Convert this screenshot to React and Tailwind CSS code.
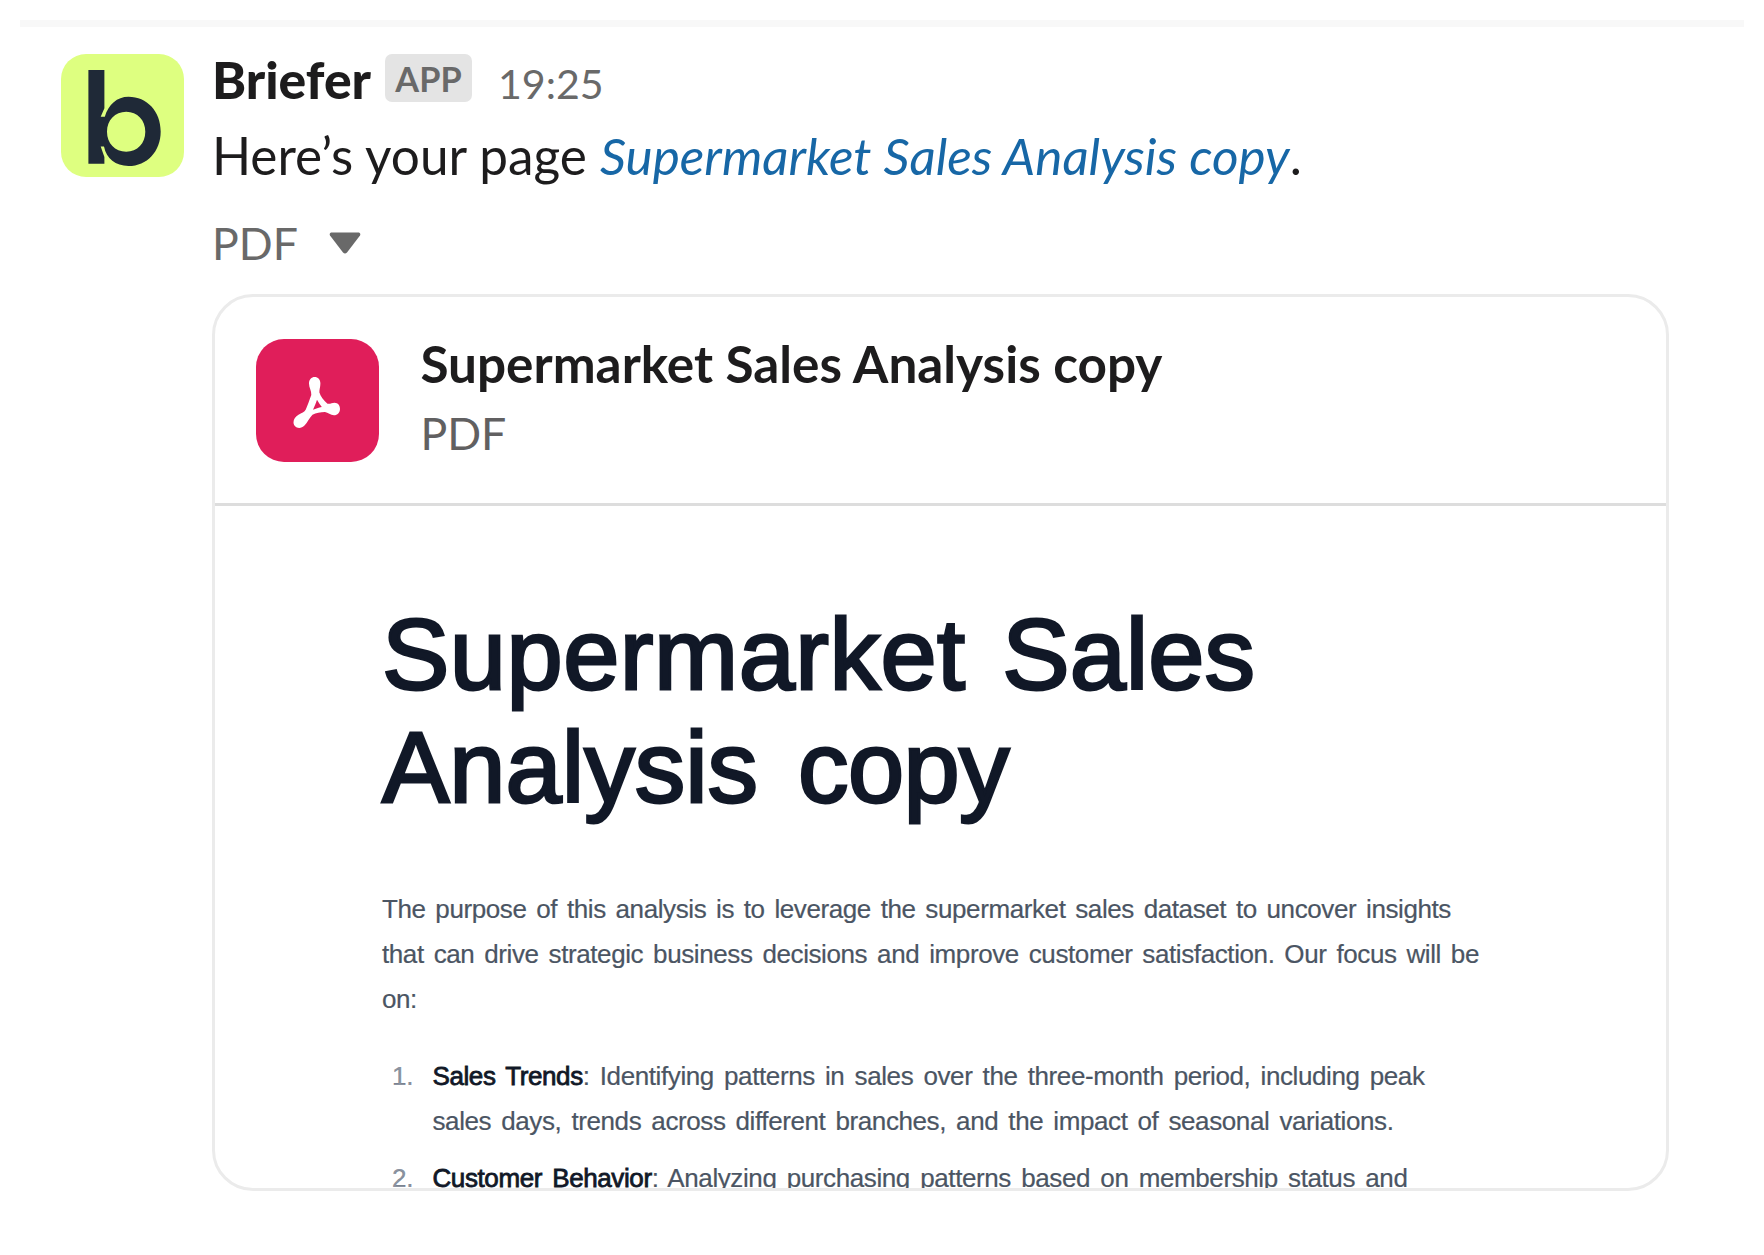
import React from "react";

function BrieferLogo() {
  return (
    <svg viewBox="0 0 123.4 123.4" className="mt-[27px] size-[123.4px] shrink-0 rounded-[25px] bg-[#deff80]">
      <path
        d="M27.4 16H43.4V54.3L39.7 62.8H43.8C47.5 50.5 56 42.8 67.5 42.8C86 42.8 99.7 57.5 99.7 77.4C99.7 97.3 86 112 67.5 112C54.5 112 45.5 105 43 92.6H39.7L43.4 103V109.7H27.4ZM65.2 57.7C54 57.7 46 66.2 46 77.7C46 89.2 54 97.7 65.2 97.7C76.4 97.7 84.3 89.2 84.3 77.7C84.3 66.2 76.4 57.7 65.2 57.7Z"
        fill="#1f2937"
        fillRule="evenodd"
      />
    </svg>
  );
}

function AcrobatIcon() {
  return (
    <svg viewBox="0 0 123.4 123.4" className="size-[123.4px] shrink-0 rounded-[28px] bg-[#e01e5a]">
      <path
        d="M58.7 38C62 38 64.4 40.5 64.4 44.5C64.4 48 63.2 51 63.4 53.5C64.5 57.5 68 61.8 71.5 64.8C74.500 65.2 76 63.7 78.500 63.7C82 63.7 84 66.5 84 70C84 73.5 81.500 76.300 78 76.300C74.500 76.300 72 73.5 69 73C64.5 73 60 74 56.5 75.8C53.500 78.500 51.5 83.5 48.500 86.500C47 88.200 45 88.9 43.200 88.9C40 88.9 37.5 86.5 37.5 83.2C37.5 80 39.500 77.700 42.5 75.800C45.5 74 48.500 73 49.8 70.5C51.5 66.500 53.5 61 55.3 56C55.600 52 53 48.5 53 44.5C53 40.500 55.500 38 58.7 38ZM61 60.7C60 64.300 58.500 67.2 57 70.7C59.800 69.600 62.5 68.6 65.8 67.9C64 65.800 62.500 63.300 61 60.7Z"
        fill="#fff"
        fillRule="evenodd"
      />
    </svg>
  );
}

function Caret() {
  return (
    <svg viewBox="0 0 32 22" className="ml-[31px] h-[22px] w-[32px]">
      <path d="M2 0.5H30Q32 1.5 31 3.5L18 20.5Q16 22.5 14 20.5L1 3.5Q0 1.5 2 0.5Z" fill="#696969" />
    </svg>
  );
}

function Line({ className, children }) {
  return <span className={"block whitespace-nowrap [text-align-last:justify] " + className}>{children}</span>;
}

function Term({ children }) {
  return <span className="text-[#111827] [-webkit-text-stroke:0.8px_#111827]">{children}</span>;
}

function Message() {
  return (
    <div className="flex pl-[61px]">
      <BrieferLogo />
      <div className="ml-[27.6px] pt-[15px]">
        <div className="flex h-[75.5px] whitespace-nowrap leading-[75.5px]">
          <span className="text-[51.6px] font-black text-[#1d1c1d]">Briefer</span>
          <span className="ml-[14px] mt-[12px] h-[48px] w-[87px] rounded-[7px] bg-[#e4e4e4] text-center text-[34.3px] font-bold leading-[50px] text-[#696969]">
            APP
          </span>
          <span className="ml-[26px] pt-[4px] text-[41.1px] text-[#696969]">19:25</span>
        </div>
        <p className="whitespace-nowrap text-[51.3px] leading-[75.5px] text-[#1d1c1d]">
          Here’s your page <em className="text-[#1767a6]">Supermarket Sales Analysis copy</em>.
        </p>
        <div className="mt-[19px] flex h-[62px] items-center text-[44.6px] leading-[62px] text-[#696969]">
          PDF
          <Caret />
        </div>
        <FileCard />
      </div>
    </div>
  );
}

function FileCard() {
  return (
    <section className="mt-[20px] h-[897px] w-[1457px] overflow-hidden rounded-[41px] border-[3px] border-[#ebebeb]">
      <header className="flex h-[209px] border-b-[3px] border-[#dddddd] pl-[41px] pt-[42px]">
        <AcrobatIcon />
        <div className="ml-[41px] whitespace-nowrap">
          <h2 className="-mt-[13px] text-[51.3px] font-bold leading-[75.5px] text-[#1d1c1d]">
            Supermarket Sales Analysis copy
          </h2>
          <p className="text-[44.6px] leading-[62px] text-[#616061]">PDF</p>
        </div>
      </header>
      <article className="pl-[167px] pt-[92px] font-['Liberation_Sans',Arial,sans-serif]">
        <h1 className="text-[101px] leading-[113.3px] text-[#111827] [-webkit-text-stroke:2.8px_#111827]">
          <Line className="w-[873px]">
            <span className="tracking-[0.5px]">Supermarket</span> Sales
          </Line>
          <Line className="w-[627px]">
            Analysis <span className="tracking-[-0.6px]">copy</span>
          </Line>
        </h1>
        <div className="mt-[62px] text-[26px] leading-[45.33px] tracking-[-0.4px] text-[#4b5563] [-webkit-text-stroke:0.2px_#4b5563]">
          <p>
            <Line className="w-[1069px]">
              The purpose of this analysis is to leverage the supermarket sales dataset to uncover insights
            </Line>
            <Line className="w-[1097px]">
              that can drive strategic business decisions and improve customer satisfaction. Our focus will be
            </Line>
            <span className="block">on:</span>
          </p>
          <ol className="mt-[31px] flex flex-col gap-[11.5px]">
            <li className="flex">
              <span className="w-[31px] text-right text-[#8b93a1]">1.</span>
              <div className="ml-[19.5px]">
                <Line className="w-[992px]">
                  <Term>Sales Trends</Term>: Identifying patterns in sales over the three-month period, including peak
                </Line>
                <Line className="w-[961px]">
                  sales days, trends across different branches, and the impact of seasonal variations.
                </Line>
              </div>
            </li>
            <li className="flex">
              <span className="w-[31px] text-right text-[#8b93a1]">2.</span>
              <div className="ml-[19.5px]">
                <Line className="w-[975px]">
                  <Term>Customer Behavior</Term>: Analyzing purchasing patterns based on membership status and
                </Line>
              </div>
            </li>
          </ol>
        </div>
      </article>
    </section>
  );
}

export default function App() {
  return (
    <main className="h-[1255px] w-[1764px] overflow-hidden bg-white pt-[20px] font-[Lato,sans-serif]">
      <div className="mx-[20px] h-[7px] bg-[#f8f8f8]" />
      <Message />
    </main>
  );
}
